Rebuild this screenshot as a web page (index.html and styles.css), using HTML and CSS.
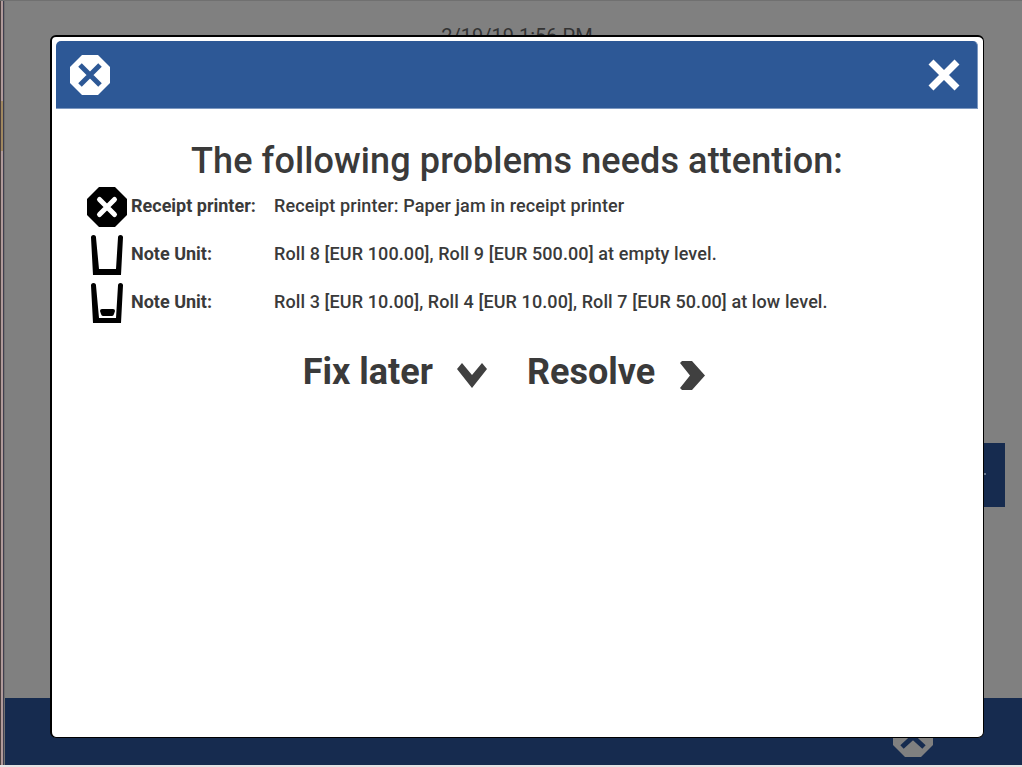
FILE: index.html
```html
<!DOCTYPE html>
<html lang="en">
<head>
<meta charset="utf-8">
<title>Problems</title>
<link rel="stylesheet" href="styles.css">
</head>
<body>
<div class="screen">
  <div class="timestamp">2/19/19 1:56 PM</div>
  <div class="side-tab"></div>
  <div class="footer">
    <svg class="footer-icon" width="40" height="40" viewBox="0 0 40 40"><path class="footer-oct" d="M12 0H28L40 12V28L28 40H12L0 28V12Z"/><path class="footer-chev" d="M9 30L20 20L31 30"/></svg>
  </div>
  <div class="base"></div>
</div>
<div class="modal">
  <header class="modal-head">
    <svg class="head-icon" width="40" height="40" viewBox="0 0 40 40"><path class="oct-white" d="M12 0H28L40 12V28L28 40H12L0 28V12Z"/><path class="x-blue" d="M10 10L30 30M30 10L10 30"/></svg>
    <svg class="head-close" width="32" height="32" viewBox="0 0 32 32"><path class="x-white" d="M3 3L29 29M29 3L3 29"/></svg>
  </header>
  <div class="modal-body">
    <h1 class="title">The following problems needs attention:</h1>
    <div class="rows">
      <div class="row">
        <svg class="row-icon" width="42" height="42" viewBox="0 0 42 42"><path d="M13 1H29L41 13V29L29 41H13L1 29V13Z"/><path class="x-row" d="M13.500 13.500L28.500 28.500M28.500 13.500L13.500 28.500"/></svg>
        <span class="name">Receipt printer:</span>
        <span class="msg">Receipt printer: Paper jam in receipt printer</span>
      </div>
      <div class="row">
        <svg class="row-icon" width="42" height="42" viewBox="0 0 42 42"><path d="M5 3.500Q5 1 7.500 1T10 3.500L13 35H30L32 3.500Q32 1 34.500 1T37 3.500L35 41H7Z"/></svg>
        <span class="name">Note Unit:</span>
        <span class="msg">Roll 8 [EUR 100.00], Roll 9 [EUR 500.00] at empty level.</span>
      </div>
      <div class="row">
        <svg class="row-icon" width="42" height="42" viewBox="0 0 42 42"><path d="M5 3.500Q5 1 7.500 1T10 3.500L13 36H30L32 3.500Q32 1 34.500 1T37 3.500L35 41H7Z"/><path d="M14 29Q14 27 16 27H27Q29 27 29 29L28 32Q27.500 34 26 34H17Q15.500 34 15 32Z"/></svg>
        <span class="name">Note Unit:</span>
        <span class="msg">Roll 3 [EUR 10.00], Roll 4 [EUR 10.00], Roll 7 [EUR 50.00] at low level.</span>
      </div>
    </div>
    <div class="actions">
      <button class="action" type="button">Fix later
        <svg class="chevron" width="30" height="25" viewBox="0 0 30 25"><path d="M0 6L5 0L15 12L25 0L30 6L15 25Z"/></svg>
      </button>
      <button class="action" type="button">Resolve
        <svg class="chevron chevron-right" width="25" height="29" viewBox="0 0 25 29"><path d="M0 2L2 0H12L25 14.500L12 29H2L0 27L10 14.500Z"/></svg>
      </button>
    </div>
  </div>
</div>
</body>
</html>
```
FILE: styles.css
```css
* { box-sizing: border-box; }
html, body { margin: 0; height: 100%; overflow: hidden; }
body { background: #808080; font-family: Roboto, "Liberation Sans", sans-serif; color: #3a3a3a; }
.screen {
  width: 1022px; height: 767px; display: flex; flex-direction: column;
  padding-left: 5px; border-top: 1px solid #707070; position: relative;
  background:
    linear-gradient(#a08860, #a08860) 1px 100px / 2px 50px no-repeat,
    linear-gradient(to right, #4a3f3f 0 1px, #b09a9a 1px 3px, #3f3f4f 3px 4px, #707070 4px 5px, #808080 5px) 0 0 / 100% 100% no-repeat;
}
.timestamp { text-align: center; font-size: 20px; color: #333; padding-top: 23px; padding-left: 7px; }
.side-tab { position: absolute; left: 984px; top: 442px; width: 21px; height: 64px; background: #162b4f; }
.side-tab::after { content: ""; position: absolute; left: 0; top: 30px; width: 2px; height: 2px; background: #6a7a90; }
.footer {
  margin-top: auto; height: 67px; background: #162b4f;
  display: flex; justify-content: flex-end; padding-right: 89px;
}
.base { height: 2px; flex: none; margin-left: -5px; background: #e4e4e4; }
.footer-icon { margin-top: 19px; }
.footer-oct { fill: #808080; }
.footer-chev { fill: none; stroke: #162b4f; stroke-width: 5; }
.modal {
  position: absolute; left: 50px; top: 35px; width: 934px; height: 703px;
  background: #fff; border: solid #000; border-width: 2px 1px 1px 2px; border-radius: 6px;
  padding: 4px 5px 4px 4px; display: flex; flex-direction: column;
}
.modal-head {
  height: 68px; flex: none; background: #2d5896; border: solid #7d98c0; border-width: 0 1px 1px 0;
  border-radius: 5px 5px 0 0; display: flex; align-items: center; justify-content: space-between;
  padding: 0 17px 0 14px;
}
.oct-white { fill: #fff; }
.x-blue { fill: none; stroke: #2d5896; stroke-width: 5; }
.x-white { fill: none; stroke: #fff; stroke-width: 7; }
.modal-body { display: flex; flex-direction: column; align-items: center; }
.title { margin: 30px 0 0; font-size: 36px; line-height: 44px; font-weight: 500; letter-spacing: 0.1px; text-align: center; }
.rows { align-self: stretch; display: flex; flex-direction: column; padding-left: 30px; }
.row { display: flex; align-items: center; height: 48px; font-size: 18px; font-weight: 500; }
.row-icon { flex: none; margin-right: 3px; }
.x-row { fill: none; stroke: #fff; stroke-width: 5; stroke-linecap: round; }
.name, .msg { margin-bottom: 4px; }
.name { width: 143px; flex: none; font-weight: 700; }
.msg { letter-spacing: 0.1px; }
.actions { display: flex; gap: 40px; margin-top: 21px; padding-right: 26px; }
.action {
  border: 0; background: none; padding: 0; font: 700 36px/48px Roboto, "Liberation Sans", sans-serif;
  color: #3a3a3a; display: flex; align-items: center; gap: 24px;
}
.chevron { fill: #404040; margin-top: 6px; }
.chevron-right { margin-left: 1px; }
```
